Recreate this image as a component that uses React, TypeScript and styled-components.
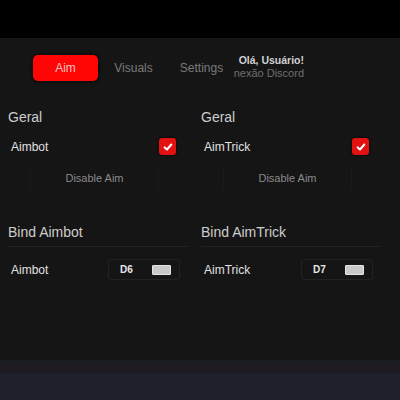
import styled, { createGlobalStyle } from 'styled-components';

const GlobalStyle = createGlobalStyle`
  html, body {
    margin: 0;
    padding: 0;
    background: #000;
  }
  body {
    font-family: 'Liberation Sans', Arial, sans-serif;
  }
`;

const Page = styled.div`
  width: 400px;
  height: 400px;
  display: flex;
  flex-direction: column;
  overflow: hidden;
  background: #000;
`;

const TopBand = styled.div`
  height: 38px;
  flex-shrink: 0;
  background: #000;
`;

const Panel = styled.div`
  height: 322px;
  flex-shrink: 0;
  background: #151515;
  padding-top: 17px;
  box-sizing: border-box;
`;

const TabBar = styled.div`
  display: flex;
  align-items: center;
  height: 26px;
  padding-left: 33px;
`;

const TabGroup = styled.div`
  display: flex;
  gap: 3px;
`;

const Tab = styled.div<{ $active?: boolean }>`
  width: 65px;
  height: 26px;
  display: flex;
  align-items: center;
  justify-content: center;
  border-radius: 5px;
  font-size: 12px;
  color: ${({ $active }) => ($active ? '#f5c2c2' : '#7a7a7a')};
  background: ${({ $active }) => ($active ? '#ff0505' : 'transparent')};
  box-shadow: ${({ $active }) => ($active ? '0 0 4px rgba(0,0,0,0.8)' : 'none')};
`;

const UserBox = styled.div`
  width: 70px;
  display: flex;
  flex-direction: column;
  overflow: hidden;
  margin-top: -2px;
`;

const UserLine = styled.div<{ $muted?: boolean }>`
  display: flex;
  justify-content: flex-end;
  white-space: nowrap;
  font-size: ${({ $muted }) => ($muted ? '11px' : '10.5px')};
  font-weight: ${({ $muted }) => ($muted ? 400 : 700)};
  color: ${({ $muted }) => ($muted ? '#6f6f6f' : '#d2d2d2')};
  line-height: 13px;
`;

const Columns = styled.div`
  display: grid;
  grid-template-columns: 180px 180px;
  column-gap: 13px;
  padding-left: 8px;
  margin-top: 26px;
`;

const Column = styled.div`
  display: flex;
  flex-direction: column;
`;

const SectionTitle = styled.div<{ $underline?: boolean }>`
  font-size: 14px;
  line-height: 20px;
  color: #cdcdcd;
  padding-bottom: ${({ $underline }) => ($underline ? '4px' : '0')};
  border-bottom: ${({ $underline }) => ($underline ? '1px solid #222' : 'none')};
  margin-top: ${({ $underline }) => ($underline ? '32px' : '0')};
`;

const OptionRow = styled.div`
  display: flex;
  align-items: center;
  justify-content: space-between;
  height: 19px;
  margin-top: 10px;
  padding: 0 12px 0 3px;
`;

const Label = styled.span`
  font-size: 12px;
  color: #e0e0e0;
`;

const Checkbox = styled.div`
  width: 17px;
  height: 17px;
  border-radius: 3px;
  background: #e31212;
  display: flex;
  align-items: center;
  justify-content: center;
  box-shadow: 0 0 3px rgba(0, 0, 0, 0.9);

  svg {
    width: 10px;
    height: 10px;
  }
`;

const GhostButton = styled.div`
  margin: 9px 0 0 22px;
  width: 129px;
  height: 25px;
  display: flex;
  align-items: center;
  justify-content: center;
  font-size: 11px;
  color: #8a8a8a;
  border-left: 1px solid #1a1a1a;
  border-right: 1px solid #1a1a1a;
  box-sizing: border-box;
`;

const BindRow = styled.div`
  display: flex;
  align-items: center;
  margin-top: 12px;
  padding-left: 3px;
  height: 21px;
`;

const BindLabel = styled(Label)`
  width: 97px;
`;

const BindBox = styled.div`
  width: 72px;
  height: 21px;
  box-sizing: border-box;
  border: 1px solid #222;
  border-radius: 3px;
  display: flex;
  align-items: center;
  padding-left: 11px;
`;

const KeyName = styled.span`
  font-size: 10px;
  font-weight: 700;
  color: #e8e8e8;
  width: 32px;
`;

const KeySwatch = styled.span`
  width: 19px;
  height: 10px;
  border-radius: 1px;
  background: #c9c9c9;
  border: 1px solid #e6e6e6;
  box-sizing: border-box;
`;

const Footer = styled.div`
  flex: 1;
  display: flex;
  flex-direction: column;
  border-top: 2px solid #1a1d22;
`;

const FooterStrip = styled.div`
  height: 11px;
  background: #1d1b21;
`;

const FooterBody = styled.div`
  flex: 1;
  background: #1e212a;
`;

const Check = () => (
  <svg viewBox="0 0 12 12">
    <path d="M2 6.5 L4.8 9 L10 3" fill="none" stroke="#fff" strokeWidth="2.4" strokeLinecap="round" strokeLinejoin="round" />
  </svg>
);

const columns = [
  { option: 'Aimbot', bindTitle: 'Bind Aimbot', key: 'D6' },
  { option: 'AimTrick', bindTitle: 'Bind AimTrick', key: 'D7' },
];

export default function App() {
  return (
    <>
      <GlobalStyle />
      <Page>
        <TopBand />
        <Panel>
          <TabBar>
            <TabGroup>
              <Tab $active>Aim</Tab>
              <Tab>Visuals</Tab>
              <Tab>Settings</Tab>
            </TabGroup>
            <UserBox>
              <UserLine>Olá, Usuário!</UserLine>
              <UserLine $muted>Conexão Discord</UserLine>
            </UserBox>
          </TabBar>
          <Columns>
            {columns.map((c) => (
              <Column key={c.option}>
                <SectionTitle>Geral</SectionTitle>
                <OptionRow>
                  <Label>{c.option}</Label>
                  <Checkbox>
                    <Check />
                  </Checkbox>
                </OptionRow>
                <GhostButton>Disable Aim</GhostButton>
                <SectionTitle $underline>{c.bindTitle}</SectionTitle>
                <BindRow>
                  <BindLabel>{c.option}</BindLabel>
                  <BindBox>
                    <KeyName>{c.key}</KeyName>
                    <KeySwatch />
                  </BindBox>
                </BindRow>
              </Column>
            ))}
          </Columns>
        </Panel>
        <Footer>
          <FooterStrip />
          <FooterBody />
        </Footer>
      </Page>
    </>
  );
}
